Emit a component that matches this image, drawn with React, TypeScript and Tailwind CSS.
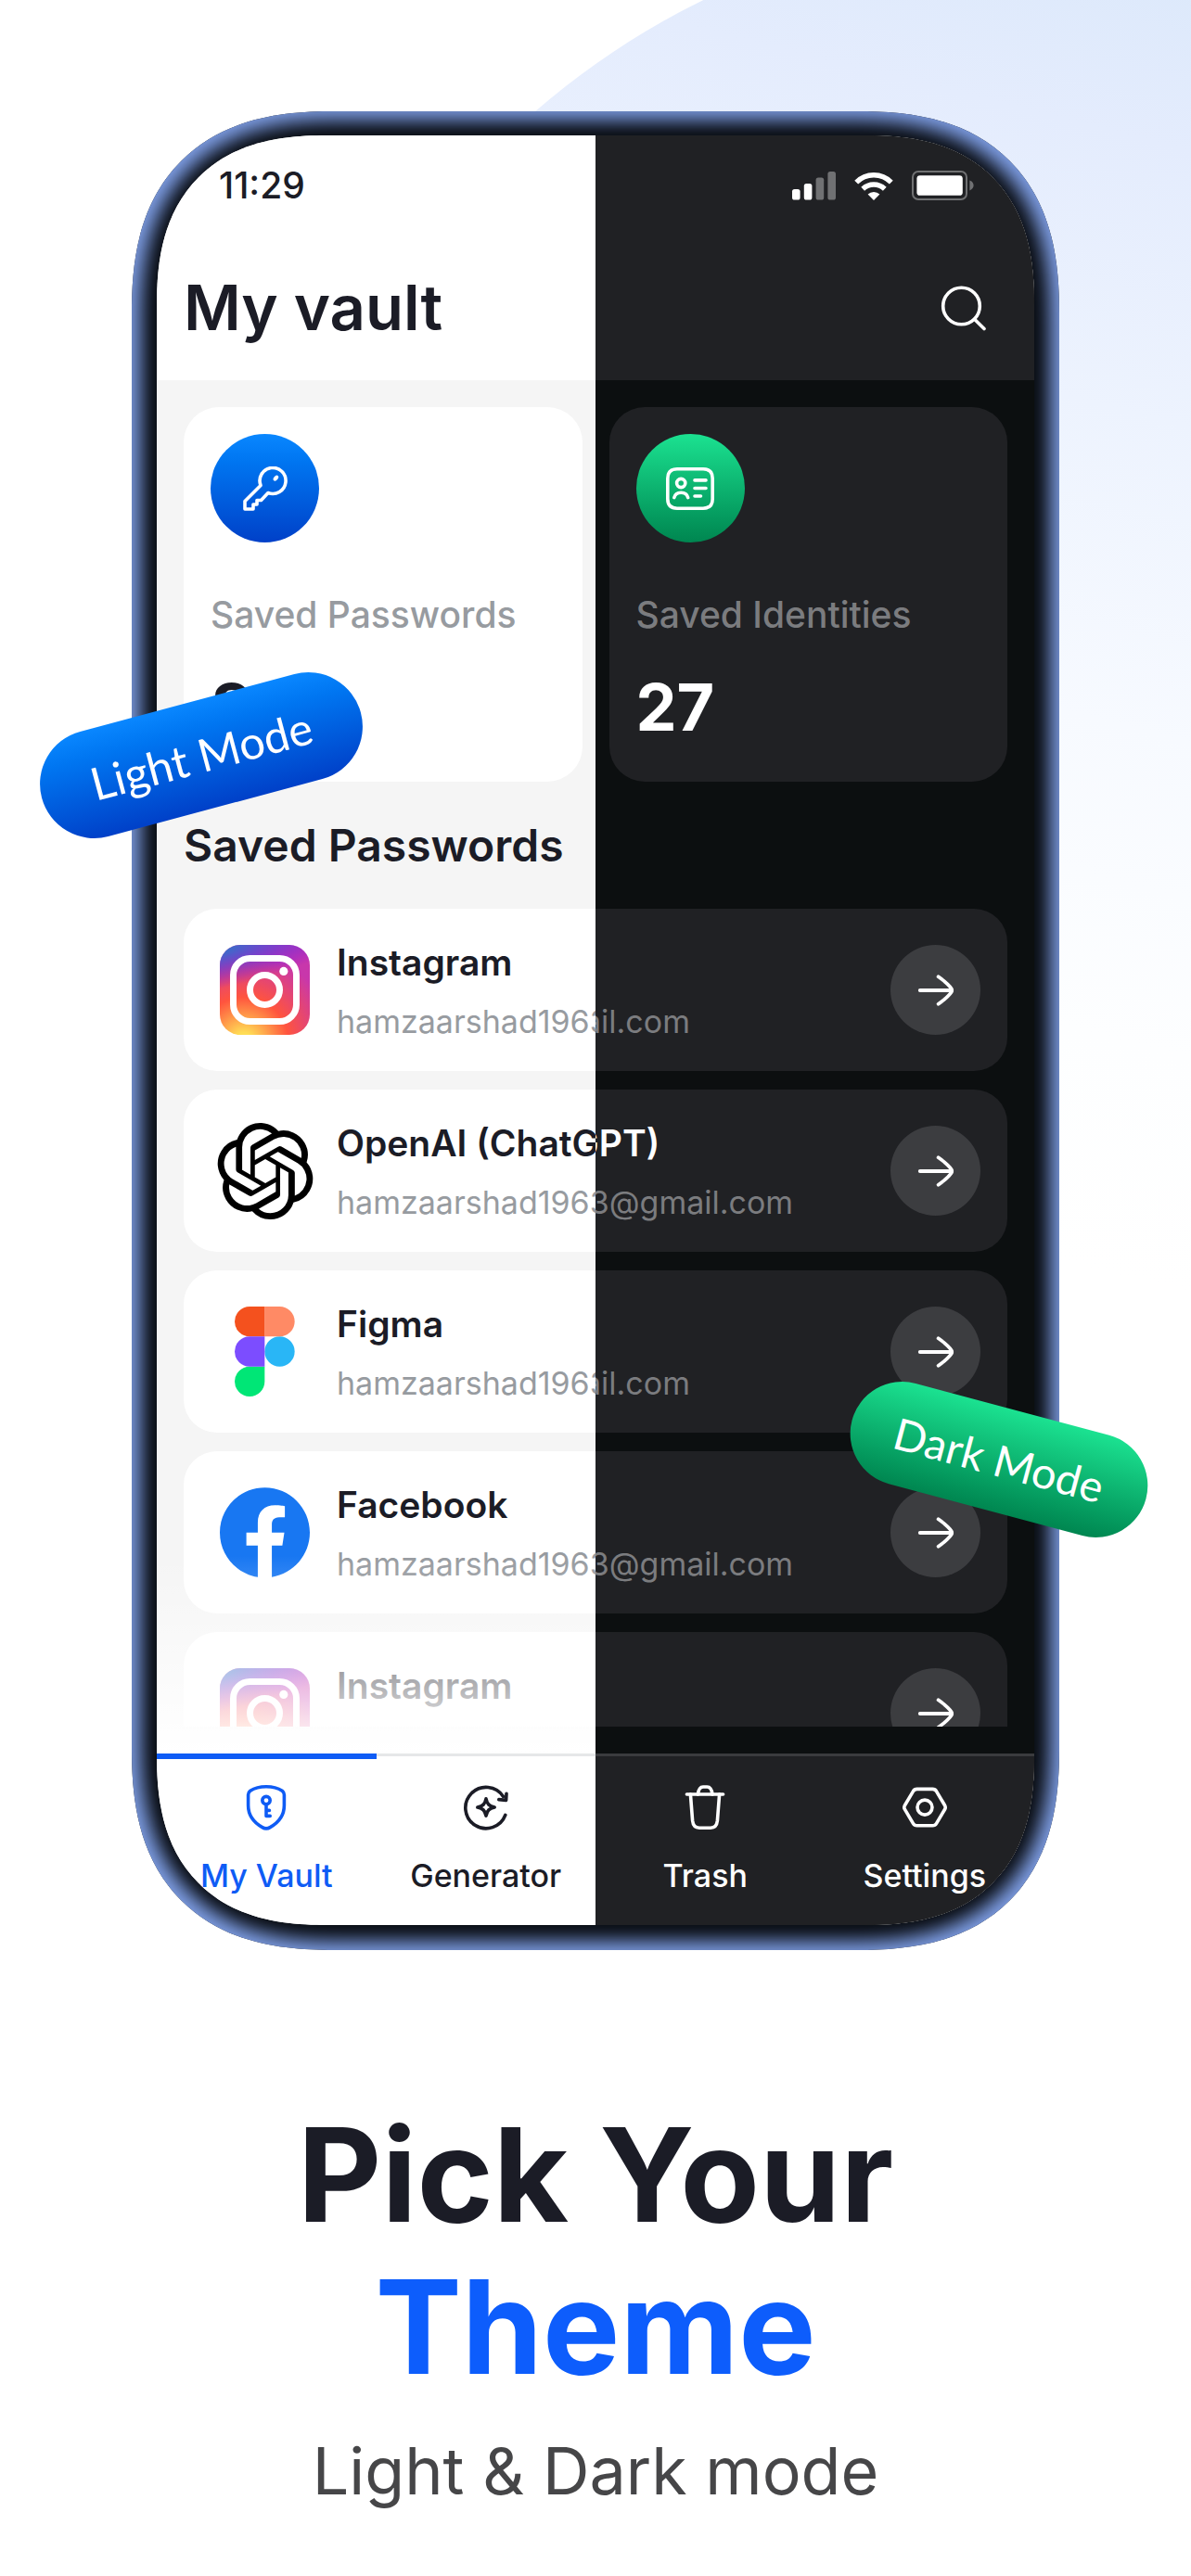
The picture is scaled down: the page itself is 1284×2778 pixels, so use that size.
import { useId } from "react";
import type { ReactNode } from "react";
import clsx from "clsx";
import { SiOpenai } from "react-icons/si";

type Theme = "light" | "dark";

const entries = [
  { name: "Instagram", logo: "instagram", email: "hamzaarshad1963@gmail.com", darkEmail: "hamza1963@gmail.com" },
  { name: "OpenAI (ChatGPT)", logo: "openai", email: "hamzaarshad1963@gmail.com", darkEmail: "hamzaarshad1963@gmail.com" },
  { name: "Figma", logo: "figma", email: "hamzaarshad1963@gmail.com", darkEmail: "hamza1963@gmail.com" },
  { name: "Facebook", logo: "facebook", email: "hamzaarshad1963@gmail.com", darkEmail: "hamzaarshad1963@gmail.com" },
  { name: "Instagram", logo: "instagram", email: "", darkEmail: "" },
];

function InstagramLogo() {
  const id = useId();
  return (
    <svg viewBox="0 0 97 97" className="size-[97px]" aria-hidden="true">
      <defs>
        <radialGradient id={`${id}-warm`} cx="0.266" cy="1.077" r="0.99">
          <stop offset="0" stopColor="#ffdd55" />
          <stop offset="0.1" stopColor="#ffdd55" />
          <stop offset="0.5" stopColor="#ff543e" />
          <stop offset="1" stopColor="#c837ab" />
        </radialGradient>
        <radialGradient
          id={`${id}-cool`}
          cx="0"
          cy="0"
          r="1"
          gradientTransform="translate(-0.167 0.072) rotate(78.7) scale(0.44 1.82)"
        >
          <stop offset="0" stopColor="#3771c8" />
          <stop offset="0.128" stopColor="#3771c8" />
          <stop offset="1" stopColor="#6600ff" stopOpacity="0" />
        </radialGradient>
      </defs>
      <rect width="97" height="97" rx="22" fill={`url(#${id}-warm)`} />
      <rect width="97" height="97" rx="22" fill={`url(#${id}-cool)`} />
      <g fill="none" stroke="#fff" strokeWidth="7">
        <rect x="14.5" y="14.5" width="68" height="68" rx="18" />
        <circle cx="48.5" cy="48.5" r="16" />
      </g>
      <circle cx="68.8" cy="28.4" r="4.6" fill="#fff" />
    </svg>
  );
}

function FigmaLogo() {
  return (
    <svg viewBox="0 0 38 57" className="h-[97px]" aria-hidden="true">
      <path fill="#29b6f6" d="M19 28.5a9.5 9.5 0 1 1 19 0 9.5 9.5 0 0 1-19 0z" />
      <path fill="#00e676" d="M0 47.5A9.5 9.5 0 0 1 9.5 38H19v9.5a9.5 9.5 0 1 1-19 0z" />
      <path fill="#ff8a65" d="M19 0v19h9.5a9.5 9.5 0 1 0 0-19H19z" />
      <path fill="#f4511e" d="M0 9.5A9.5 9.5 0 0 0 9.5 19H19V0H9.5A9.5 9.5 0 0 0 0 9.5z" />
      <path fill="#7c4dff" d="M0 28.5A9.5 9.5 0 0 0 9.5 38H19V19H9.5A9.5 9.5 0 0 0 0 28.5z" />
    </svg>
  );
}

function FacebookLogo() {
  return (
    <svg viewBox="0 0 24 24" className="size-[97px]" aria-hidden="true">
      <path
        fill="#1877f2"
        d="M24 12.073c0-6.627-5.373-12-12-12s-12 5.373-12 12c0 5.99 4.388 10.954 10.125 11.854v-8.385H7.078v-3.47h3.047V9.43c0-3.007 1.792-4.669 4.533-4.669 1.312 0 2.686.235 2.686.235v2.953H15.83c-1.491 0-1.956.925-1.956 1.874v2.25h3.328l-.532 3.47h-2.796v8.385C19.612 23.027 24 18.062 24 12.073z"
      />
    </svg>
  );
}

function Logo({ name }: { name: string }) {
  if (name === "instagram") return <InstagramLogo />;
  if (name === "figma") return <FigmaLogo />;
  if (name === "facebook") return <FacebookLogo />;
  return <SiOpenai className="size-[104px] shrink-0 text-black" aria-hidden="true" />;
}

function KeyIcon() {
  return (
    <svg viewBox="0 0 48 48" className="size-12" fill="none" stroke="currentColor" strokeWidth="3.6" strokeLinejoin="round" aria-hidden="true">
      <path d="M2 37.5 19 20.5A14 14 0 1 1 27 28.5L19.5 36.5H15V41H11V46H2z" />
      <ellipse cx="35.4" cy="12.6" rx="2.2" ry="3.4" transform="rotate(40 35.4 12.6)" fill="currentColor" stroke="none" />
    </svg>
  );
}

function IdCardIcon() {
  return (
    <svg viewBox="0 0 52 46" className="w-[52px]" fill="none" stroke="currentColor" strokeWidth="3.6" strokeLinecap="round" aria-hidden="true">
      <path d="M12 1.8H40Q50.2 1.8 50.2 12V34Q50.2 44.2 40 44.2H12Q1.8 44.2 1.8 34V12Q1.8 1.8 12 1.8z" />
      <circle cx="16.2" cy="17" r="4.6" />
      <path d="M8.8 32.6C10.5 25.4 22 25.4 23.7 32.6" />
      <path d="M31 13.9H43M31 22.5H43M31 31H37.5" />
    </svg>
  );
}

function SearchIcon() {
  return (
    <svg viewBox="0 0 50 50" className="size-[50px]" fill="none" stroke="currentColor" strokeWidth="3.6" strokeLinecap="round" aria-hidden="true">
      <circle cx="23.5" cy="23" r="19.8" />
      <path d="M37.6 37.2 48 47.6" />
    </svg>
  );
}

function ArrowIcon() {
  return (
    <svg viewBox="0 0 48 48" className="size-12" fill="none" stroke="currentColor" strokeWidth="3.8" strokeLinecap="round" strokeLinejoin="round" aria-hidden="true">
      <path d="M6.8 24H41" />
      <path d="M26.6 9.3Q37 16.6 40.6 22Q41.8 24 40.6 26Q37 31.4 26.6 38.7" />
    </svg>
  );
}

function StatusIcons() {
  return (
    <div className="flex items-center gap-5 text-white">
      <svg viewBox="0 0 48 32" className="h-8 w-12" fill="currentColor" aria-hidden="true">
        <rect x="1" y="20" width="8.6" height="11.5" rx="2.6" />
        <rect x="13.8" y="14" width="8.6" height="17.5" rx="2.6" />
        <rect x="26.6" y="7.6" width="8.6" height="23.9" rx="2.6" opacity="0.36" />
        <rect x="39.4" y="1" width="8.6" height="30.5" rx="2.6" opacity="0.36" />
      </svg>
      <svg viewBox="0 0 42 32" className="h-8 w-[42px]" fill="none" stroke="currentColor" strokeWidth="5.4" aria-hidden="true">
        <path d="M2.2 12.6A26.4 26.4 0 0 1 39.8 12.6" />
        <path d="M9.2 19.8A17 17 0 0 1 32.8 19.8" />
        <path d="M21 32 14.6 25.6A9 9 0 0 1 27.4 25.6z" fill="currentColor" stroke="none" />
      </svg>
      <svg viewBox="0 0 67 32" className="h-8 w-[67px]" aria-hidden="true">
        <rect x="1" y="1" width="58" height="30" rx="6" fill="none" stroke="#707173" strokeWidth="2" />
        <rect x="5.4" y="5.2" width="49.4" height="21.6" rx="3.4" fill="#fff" />
        <path d="M62.4 10.6Q66.6 12.6 66.6 16T62.4 21.4z" fill="#707173" />
      </svg>
    </div>
  );
}

function ShieldIcon() {
  return (
    <svg viewBox="0 0 56 56" className="size-14" fill="none" stroke="currentColor" strokeWidth="3.6" strokeLinecap="round" strokeLinejoin="round" aria-hidden="true">
      <path d="M28 5.8C34 5.8 40.5 7.2 45.2 10.2Q47.4 11.8 47.4 14.6V26C47.4 38 41 44.6 32.2 49.6Q28 52.2 23.8 49.6C15 44.6 8.6 38 8.6 26V14.6Q8.6 11.8 10.8 10.2C15.5 7.2 22 5.8 28 5.8z" />
      <circle cx="28" cy="20.6" r="4.2" />
      <path d="M28 25V37.4H32.2M28 31.4H31.4" />
    </svg>
  );
}

function GeneratorIcon() {
  return (
    <svg viewBox="0 0 56 56" className="size-14" fill="none" stroke="currentColor" strokeWidth="3.6" strokeLinecap="round" strokeLinejoin="round" aria-hidden="true">
      <path d="M48.8 36.4A22.2 22.2 0 1 1 46.6 16.4" />
      <path d="M41.8 19.6 49.6 20.4 50 13.2" />
      <path d="M28 18.8C29.2 24.6 31.4 26.8 37.2 28C31.4 29.2 29.2 31.4 28 37.2C26.8 31.4 24.6 29.2 18.8 28C24.6 26.8 26.8 24.6 28 18.8z" />
    </svg>
  );
}

function TrashIcon() {
  return (
    <svg viewBox="0 0 56 56" className="size-14" fill="none" stroke="currentColor" strokeWidth="3.6" strokeLinecap="round" strokeLinejoin="round" aria-hidden="true">
      <path d="M8.4 14H47.6" />
      <path d="M20.4 14Q21.4 6 26 6H30.4Q35 6 36 14" />
      <path d="M12.4 14 14.6 42.4Q15.4 50.2 22 50.2H34Q40.6 50.2 41.4 42.4L43.6 14" />
    </svg>
  );
}

function SettingsIcon() {
  return (
    <svg viewBox="0 0 56 56" className="size-14" fill="none" stroke="currentColor" strokeWidth="3.6" strokeLinejoin="round" aria-hidden="true">
      <path d="M19.6 8.4H36.4Q39.2 8.4 40.6 10.8L49.6 26Q50.8 28.2 49.6 30.2L40.6 45.4Q39.2 47.8 36.4 47.8H19.6Q16.8 47.8 15.4 45.4L6.4 30.2Q5.2 28.2 6.4 26L15.4 10.8Q16.8 8.4 19.6 8.4z" />
      <circle cx="28" cy="28.1" r="8" />
    </svg>
  );
}

const tabs = [
  { label: "My Vault", theme: "light", active: true, Icon: ShieldIcon },
  { label: "Generator", theme: "light", active: false, Icon: GeneratorIcon },
  { label: "Trash", theme: "dark", active: false, Icon: TrashIcon },
  { label: "Settings", theme: "dark", active: false, Icon: SettingsIcon },
];

function StatCard({ icon, iconClass, label, count }: { icon: ReactNode; iconClass: string; label: string; count: string }) {
  return (
    <div className="rounded-[38px] bg-white px-[29px] pt-[29px] pb-10 group-data-[theme=dark]:bg-[#202124]">
      <div className={clsx("flex size-[117px] items-center justify-center rounded-full bg-linear-to-b text-white", iconClass)}>
        {icon}
      </div>
      <p className="mt-[54px] text-[39px] leading-[48px] font-medium text-[#979ba0] group-data-[theme=dark]:text-[#7b7c7f]">{label}</p>
      <p className="mt-9 text-[70px] leading-[80px] font-bold">{count}</p>
    </div>
  );
}

function Screen({ theme, className }: { theme: Theme; className?: string }) {
  const light = theme === "light";
  return (
    <div
      data-theme={theme}
      className={clsx(
        "group flex min-w-0 flex-col bg-[#f5f5f5] text-[#1b1c26] [grid-area:1/1] data-[theme=dark]:bg-[#0c0f10] data-[theme=dark]:text-white",
        className,
      )}
    >
      <header className="bg-white pt-6 pb-[38px] group-data-[theme=dark]:bg-[#202124]">
        <div className={clsx("flex h-[60px] items-center pr-[65px] pl-[67px]", !light && "justify-end")}>
          {light ? <time className="text-[39px] leading-[60px] font-medium">11:29</time> : <StatusIcons />}
        </div>
        <div className={clsx("mt-[62px] flex h-20 items-center pr-[27px] pl-[29px]", !light && "justify-end")}>
          {light ? (
            <h2 className="text-[67px] leading-[80px] font-semibold">My vault</h2>
          ) : (
            <button type="button" aria-label="Search" className="flex h-20 w-[100px] items-center justify-center">
              <SearchIcon />
            </button>
          )}
        </div>
      </header>

      <div className="relative px-[29px] py-[29px]">
        <div className="grid grid-cols-2 gap-[29px]">
          {light ? (
            <StatCard icon={<KeyIcon />} iconClass="from-[#0a87ff] to-[#0040c8]" label="Saved Passwords" count="82" />
          ) : (
            <div className="col-start-2">
              <StatCard icon={<IdCardIcon />} iconClass="from-[#1be291] to-[#008650]" label="Saved Identities" count="27" />
            </div>
          )}
        </div>
        <div className="flex h-[137px] items-center">
          {light && <h3 className="text-[48px] leading-[56px] font-semibold">Saved Passwords</h3>}
        </div>

        <ul className="flex h-[882px] flex-col gap-5 overflow-hidden">
          {entries.map((entry, i) => (
            <li
              key={i}
              className="flex h-[175px] shrink-0 items-center rounded-[36px] bg-white pr-[29px] pl-[39px] group-data-[theme=dark]:bg-[#202124]"
            >
              <div className="flex w-[97px] shrink-0 items-center justify-center">{light && <Logo name={entry.logo} />}</div>
              <div className="ml-[29px] grow pt-1 whitespace-nowrap">
                <p className="h-12 text-[39px] leading-[48px] font-semibold">{entry.name}</p>
                <p className="mt-4 h-12 text-[34px] leading-[48px] text-[#979ba0] group-data-[theme=dark]:text-[#7b7c7f]">
                  {light ? entry.email : entry.darkEmail}
                </p>
              </div>
              {!light && (
                <button
                  type="button"
                  aria-label={`Open ${entry.name}`}
                  className="flex size-[97px] shrink-0 items-center justify-center rounded-full bg-[#3c3d40]"
                >
                  <ArrowIcon />
                </button>
              )}
            </li>
          ))}
        </ul>

        {light && <div className="absolute inset-x-0 bottom-0 h-[213px] bg-linear-to-b from-white/0 to-white" />}
      </div>

      <nav className="grid grid-cols-4 bg-white group-data-[theme=dark]:bg-[#202124]">
        {tabs.map(({ label, theme: side, active, Icon }) => (
          <div
            key={label}
            className={clsx(
              "h-[185px]",
              active && light
                ? "border-t-[6px] border-[#0f5cf5] pt-6 text-[#0f5cf5]"
                : "border-t-[3px] border-[#e6e7e8] pt-[27px] group-data-[theme=dark]:border-[#3a3b3e]",
            )}
          >
            {side === theme && (
              <button type="button" className="flex w-full flex-col items-center">
                <Icon />
                <span className="mt-[26px] text-[34px] leading-10 font-medium">{label}</span>
              </button>
            )}
          </div>
        ))}
      </nav>
    </div>
  );
}

export default function App() {
  return (
    <main className="relative overflow-hidden bg-white px-6 font-['Inter',sans-serif]">
      <div className="absolute -top-[87px] -right-[699px] size-[1700px] rounded-full bg-[linear-gradient(194deg,#d3e5f8_0%,#e4ecfd_20%,#edf3fe_34%,#f7faff_50%,#fdfeff_66%,#ffffff_78%)]" />

      {/* phone */}
      <div className="relative mx-auto mt-[120px] max-w-[1000px]">
        <div className="rounded-[180px] bg-[#080b10] px-[27px] pt-[26px] pb-[27px] shadow-[inset_0_0_20px_10px_#7f9fe6] supports-[corner-shape:superellipse(1.3)]:rounded-[218px] supports-[corner-shape:superellipse(1.3)]:[corner-shape:superellipse(1.3)]">
          <div className="grid overflow-hidden rounded-[152px] supports-[corner-shape:superellipse(1.3)]:rounded-[184px] supports-[corner-shape:superellipse(1.3)]:[corner-shape:superellipse(1.3)]">
            <Screen theme="light" />
            <Screen theme="dark" className="[clip-path:inset(0_0_0_50%)]" />
          </div>
        </div>

        <div className="absolute top-[636px] -left-[103px] flex h-[117px] w-[356px] -rotate-15 items-center justify-center rounded-full bg-linear-to-b from-[#0a87ff] to-[#0040c8] font-['Lato',sans-serif] text-[49px] text-white">
          Light Mode
        </div>
        <div className="absolute top-[1398px] -right-[99px] flex h-[112px] w-[328px] rotate-15 items-center justify-center rounded-full bg-linear-to-b from-[#1be291] to-[#008650] font-['Lato',sans-serif] text-[47px] text-white">
          Dark Mode
        </div>
      </div>

      <section className="relative mt-40 pb-16 text-center">
        <h1 className="text-[140px] leading-[164px] font-bold text-[#1b1c26]">
          Pick Your
          <span className="block text-[#0d5dfc]">Theme</span>
        </h1>
        <p className="mt-6 text-[70px] leading-[100px] text-[#464648]">Light &amp; Dark mode</p>
      </section>
    </main>
  );
}
